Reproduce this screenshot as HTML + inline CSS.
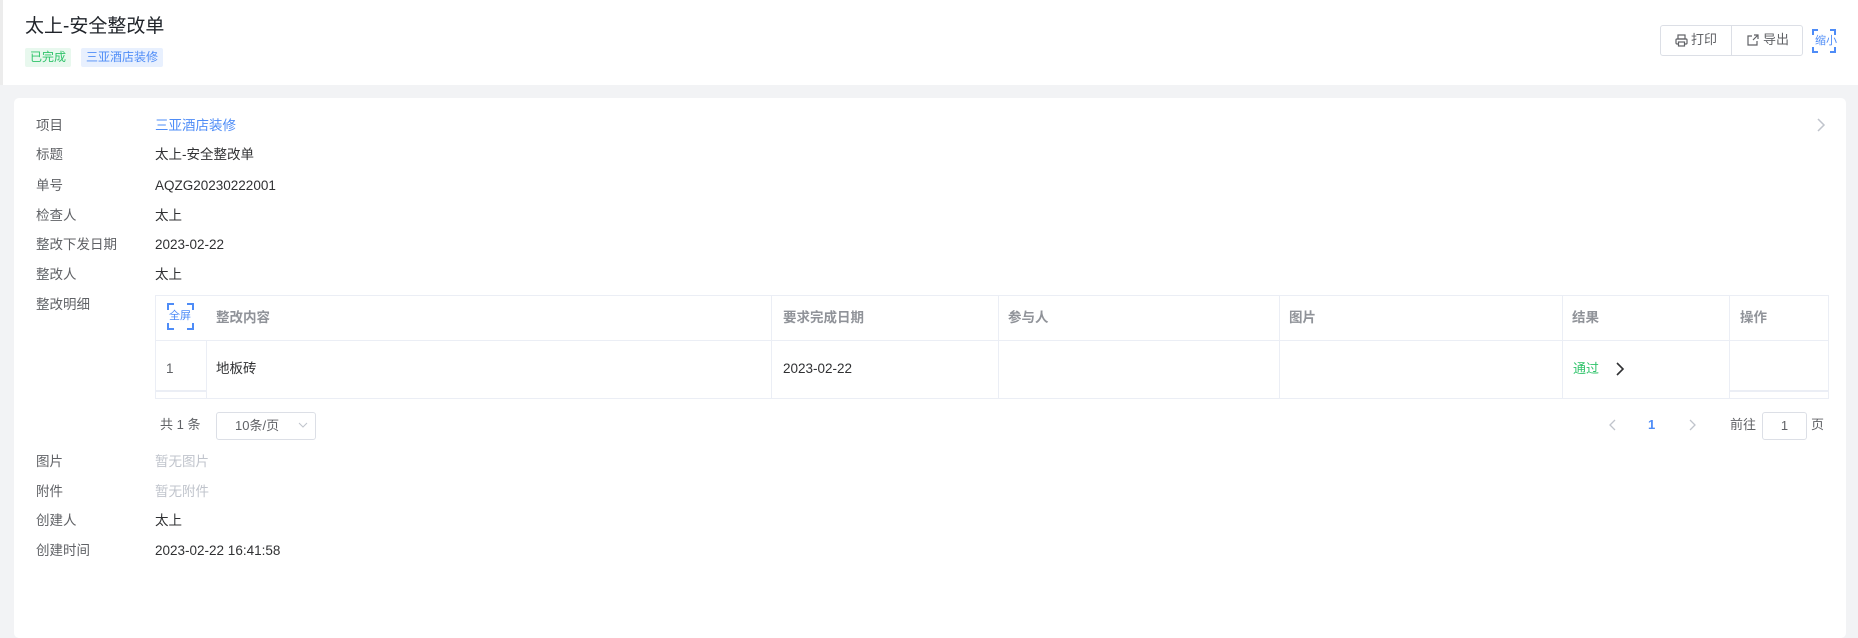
<!DOCTYPE html>
<html><head><meta charset="utf-8"><style>
*{box-sizing:border-box;margin:0;padding:0}
body{width:1858px;height:621px;background:#f2f3f5;font-family:"Liberation Sans","Noto Sans CJK SC",sans-serif;position:relative;overflow:hidden;color:#303133}
.a{position:absolute;white-space:nowrap}
.hdr{position:absolute;left:0;top:0;width:1858px;height:85px;background:#fff;border-left:3px solid #ececec}
.card{position:absolute;left:14px;top:98px;width:1832px;height:540px;background:#fff;border-radius:5px}
.lbl{position:absolute;left:36px;font-size:13.5px;color:#606266;line-height:20px}
.val{position:absolute;left:155px;font-size:13.5px;color:#303133;line-height:20px}
.tag{position:absolute;top:48px;height:19px;font-size:12px;line-height:19px;padding:0 5px;border-radius:2px}
.th{position:absolute;top:296px;height:44px;line-height:44px;font-size:13.5px;font-weight:bold;color:#909399}
.vl{position:absolute;width:1px;background:#ebeef5}
.hl{position:absolute;height:1px;background:#ebeef5}
</style></head><body>
<div class="hdr"></div>
<div class="a" style="left:25px;top:14px;font-size:19px;line-height:26px;color:#1f2329">太上-安全整改单</div>
<div class="tag" style="left:25px;background:#e8f8ee;color:#2fc36a">已完成</div>
<div class="tag" style="left:81px;background:#e8f0fe;color:#4e8cf7">三亚酒店装修</div>
<div class="a" style="left:1660px;top:25px;width:143px;height:31px;border:1px solid #dcdfe6;border-radius:3px"></div>
<div class="a" style="left:1731px;top:25px;width:1px;height:31px;background:#dcdfe6"></div>
<svg class="a" style="left:1675px;top:34px" width="13" height="13" viewBox="0 0 13 13" fill="none" stroke="#606266" stroke-width="1.2"><rect x="3" y="1" width="7" height="4"/><rect x="1" y="5" width="11" height="5" rx="1"/><rect x="3.5" y="8" width="6" height="4" fill="#fff"/></svg>
<div class="a" style="left:1691px;top:31px;font-size:13px;line-height:18px;color:#606266">打印</div>
<svg class="a" style="left:1746px;top:34px" width="13" height="13" viewBox="0 0 13 13" fill="none" stroke="#606266" stroke-width="1.2"><path d="M6 2H2v9h9V7"/><path d="M7 6l5-5M8 1h4v4"/></svg>
<div class="a" style="left:1763px;top:31px;font-size:13px;line-height:18px;color:#606266">导出</div>
<svg class="a" style="left:1812px;top:29px" width="24" height="24" viewBox="0 0 24 24" fill="none" stroke="#4e8cf7" stroke-width="2"><path d="M1 6V1h5M18 1h5v5M23 18v5h-5M6 23H1v-5"/></svg>
<div class="a" style="left:1815px;top:33px;font-size:11px;line-height:16px;color:#4e8cf7">缩小</div>

<div class="card"></div>
<svg class="a" style="left:1816px;top:117px" width="10" height="16" viewBox="0 0 10 16" fill="none" stroke="#c0c4cc" stroke-width="1.5"><path d="M2 2l6 6-6 6"/></svg>
<div class="lbl" style="top:116px">项目</div><div class="val" style="top:116px;color:#4e8cf7">三亚酒店装修</div>
<div class="lbl" style="top:145px">标题</div><div class="val" style="top:145px">太上-安全整改单</div>
<div class="lbl" style="top:176px">单号</div><div class="val" style="top:176px">AQZG20230222001</div>
<div class="lbl" style="top:206px">检查人</div><div class="val" style="top:206px">太上</div>
<div class="lbl" style="top:235px">整改下发日期</div><div class="val" style="top:235px">2023-02-22</div>
<div class="lbl" style="top:265px">整改人</div><div class="val" style="top:265px">太上</div>
<div class="lbl" style="top:295px">整改明细</div>

<div class="hl" style="left:155px;top:295px;width:1674px"></div>
<div class="hl" style="left:155px;top:340px;width:1674px"></div>
<div class="hl" style="left:155px;top:390px;width:51px;height:2px"></div>
<div class="hl" style="left:1729px;top:390px;width:100px;height:2px"></div>
<div class="hl" style="left:155px;top:398px;width:1674px"></div>
<div class="vl" style="left:155px;top:295px;height:104px"></div>
<div class="vl" style="left:206px;top:340px;height:58px"></div>
<div class="vl" style="left:771px;top:295px;height:104px"></div>
<div class="vl" style="left:998px;top:295px;height:104px"></div>
<div class="vl" style="left:1279px;top:295px;height:104px"></div>
<div class="vl" style="left:1562px;top:295px;height:104px"></div>
<div class="vl" style="left:1729px;top:295px;height:104px"></div>
<div class="vl" style="left:1828px;top:295px;height:104px"></div>
<svg class="a" style="left:167px;top:303px" width="27" height="27" viewBox="0 0 27 27" fill="none" stroke="#4e8cf7" stroke-width="2"><path d="M1 7V1h6M20 1h6v6M26 20v6h-6M7 26H1v-6"/></svg>
<div class="a" style="left:169px;top:308px;font-size:11px;line-height:16px;color:#4e8cf7">全屏</div>
<div class="th" style="left:216px">整改内容</div>
<div class="th" style="left:783px">要求完成日期</div>
<div class="th" style="left:1008px">参与人</div>
<div class="th" style="left:1289px">图片</div>
<div class="th" style="left:1572px">结果</div>
<div class="th" style="left:1740px">操作</div>
<div class="a" style="left:166px;top:359px;font-size:13.5px;line-height:20px;color:#606266">1</div>
<div class="a" style="left:216px;top:359px;font-size:13.5px;line-height:20px">地板砖</div>
<div class="a" style="left:783px;top:359px;font-size:13.5px;line-height:20px">2023-02-22</div>
<div class="a" style="left:1573px;top:360px;font-size:13px;line-height:18px;color:#2fc36a">通过</div>
<svg class="a" style="left:1615px;top:361px" width="10" height="16" viewBox="0 0 10 16" fill="none" stroke="#303133" stroke-width="1.6"><path d="M2 2l6 6-6 6"/></svg>

<div class="a" style="left:160px;top:416px;font-size:13px;line-height:18px;color:#606266">共 1 条</div>
<div class="a" style="left:216px;top:412px;width:100px;height:28px;border:1px solid #dcdfe6;border-radius:3px"></div>
<div class="a" style="left:235px;top:417px;font-size:13px;line-height:18px;color:#606266">10条/页</div>
<svg class="a" style="left:298px;top:422px" width="10" height="7" viewBox="0 0 10 7" fill="none" stroke="#c0c4cc" stroke-width="1"><path d="M1 1l4 4 4-4"/></svg>
<svg class="a" style="left:1609px;top:419px" width="8" height="12" viewBox="0 0 8 12" fill="none" stroke="#c0c4cc" stroke-width="1.3"><path d="M6 1L1 6l5 5"/></svg>
<div class="a" style="left:1648px;top:416px;font-size:13px;font-weight:bold;line-height:18px;color:#4e8cf7">1</div>
<svg class="a" style="left:1688px;top:419px" width="8" height="12" viewBox="0 0 8 12" fill="none" stroke="#c0c4cc" stroke-width="1.3"><path d="M2 1l5 5-5 5"/></svg>
<div class="a" style="left:1730px;top:416px;font-size:13px;line-height:18px;color:#606266">前往</div>
<div class="a" style="left:1762px;top:412px;width:45px;height:28px;border:1px solid #dcdfe6;border-radius:3px;text-align:center;font-size:13px;line-height:26px;color:#606266">1</div>
<div class="a" style="left:1811px;top:416px;font-size:13px;line-height:18px;color:#606266">页</div>

<div class="lbl" style="top:452px">图片</div><div class="val" style="top:452px;color:#c0c4cc">暂无图片</div>
<div class="lbl" style="top:482px">附件</div><div class="val" style="top:482px;color:#c0c4cc">暂无附件</div>
<div class="lbl" style="top:511px">创建人</div><div class="val" style="top:511px">太上</div>
<div class="lbl" style="top:541px">创建时间</div><div class="val" style="top:541px">2023-02-22 16:41:58</div>
</body></html>
